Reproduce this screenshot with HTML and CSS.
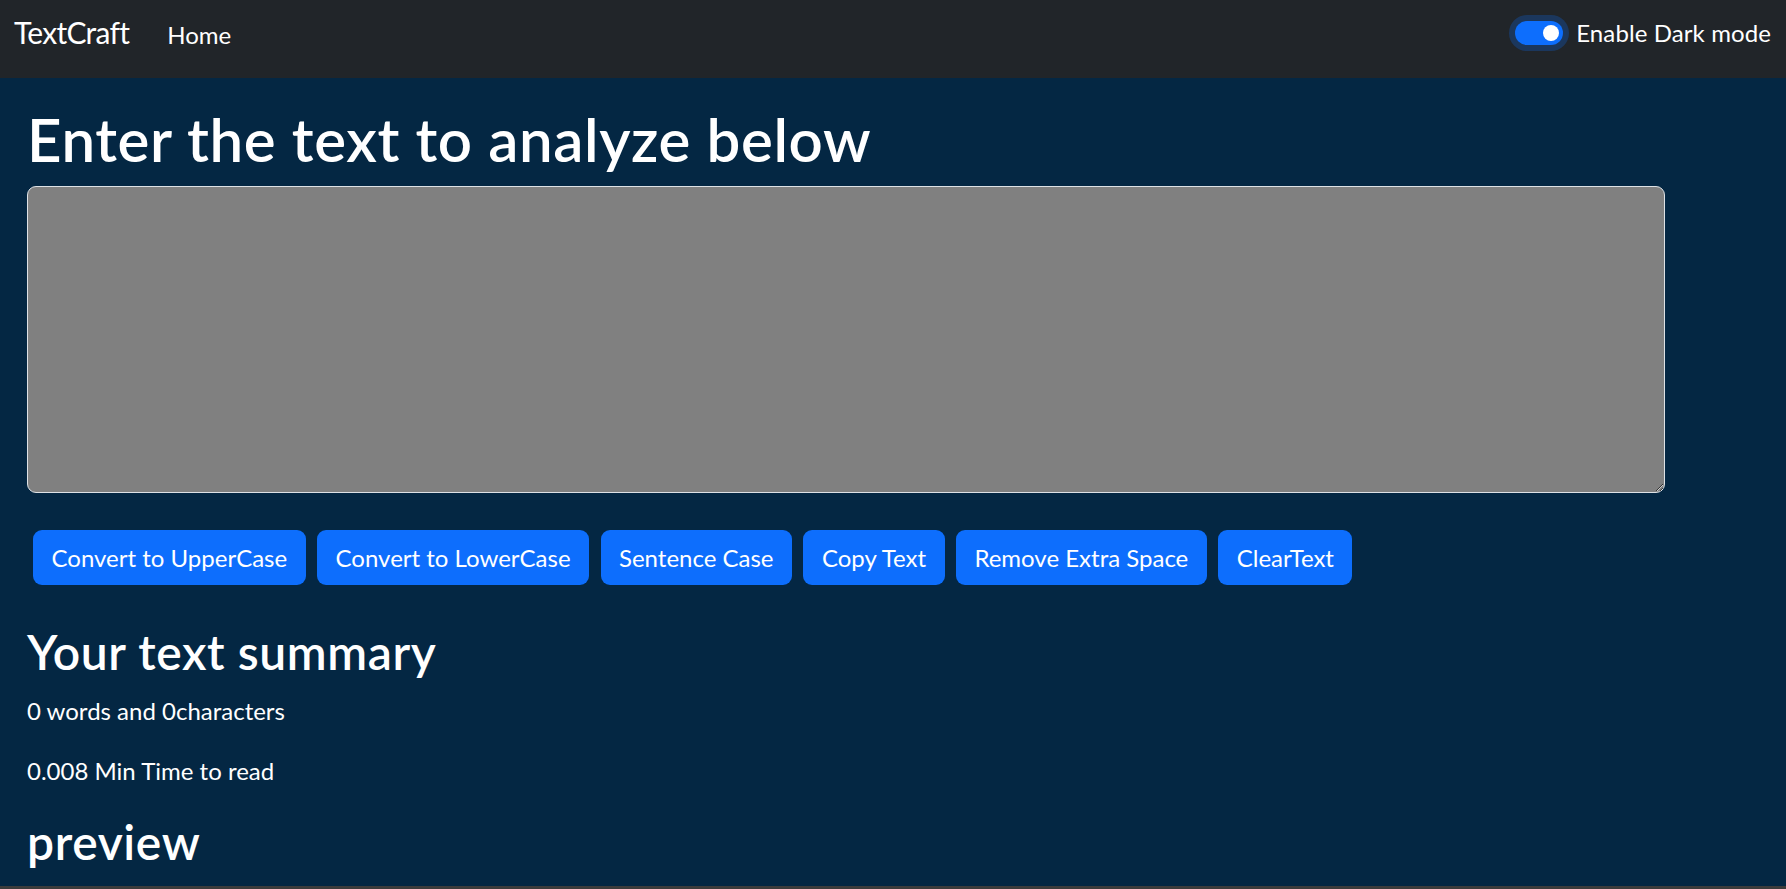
FILE: index.html
```html
<!DOCTYPE html>
<html lang="en">
<head>
<meta charset="utf-8">
<title>TextCraft</title>
<link rel="stylesheet" href="styles.css">
</head>
<body>
<div class="page">
  <nav class="navbar">
    <div class="nav-left">
      <a class="brand" href="#">TextCraft</a>
      <a class="nav-link" href="#">Home</a>
    </div>
    <div class="nav-right">
      <span class="switch"></span>
      <label class="switch-label">Enable Dark mode</label>
    </div>
  </nav>
  <main class="main">
    <section class="editor">
      <h1 class="title">Enter the text to analyze below</h1>
      <textarea class="textbox"></textarea>
      <div class="actions">
        <button class="btn">Convert to UpperCase</button>
        <button class="btn">Convert to LowerCase</button>
        <button class="btn">Sentence Case</button>
        <button class="btn">Copy Text</button>
        <button class="btn">Remove Extra Space</button>
        <button class="btn">ClearText</button>
      </div>
    </section>
    <section class="summary">
      <h2 class="subtitle">Your text summary</h2>
      <p class="stat">0 words and 0characters</p>
      <p class="stat">0.008 Min Time to read</p>
      <h2 class="subtitle">preview</h2>
    </section>
  </main>
  <div class="bottom-bar"></div>
</div>
</body>
</html>
```
FILE: styles.css
```css
* { box-sizing: border-box; }
html, body { margin: 0; padding: 0; }
body {
  font-family: Lato, "Noto Sans", sans-serif;
  color: #fff;
  background: #042743;
}
.page {
  height: 100vh;
  display: flex;
  flex-direction: column;
  overflow: hidden;
}
.navbar {
  flex: 0 0 78px;
  height: 78px;
  background: #212529;
  display: flex;
  justify-content: space-between;
  align-items: flex-start;
  padding: 0 15px 0 14px;
}
.nav-left {
  display: flex;
  align-items: baseline;
  padding-top: 14px;
}
.brand {
  color: #fff;
  text-decoration: none;
  font-size: 30px;
  line-height: 36px;
  letter-spacing: -0.75px;
  margin-right: 38px;
}
.nav-link {
  color: #fff;
  text-decoration: none;
  font-size: 24px;
  line-height: 28.8px;
}
.nav-right {
  display: flex;
  align-items: center;
  margin-top: 19px;
}
.switch {
  position: relative;
  width: 48px;
  height: 24px;
  border-radius: 12px;
  background: #0d6efd;
  box-shadow: 0 0 0 6px rgba(13, 110, 253, 0.25);
  margin-right: 13px;
}
.switch::after {
  content: "";
  position: absolute;
  right: 4px;
  top: 4px;
  width: 16px;
  height: 16px;
  border-radius: 50%;
  background: #fff;
}
.switch-label {
  font-size: 24px;
  line-height: 28.8px;
  letter-spacing: 0.1px;
}
.main {
  flex: 1;
  overflow: hidden;
  padding: 0 0 0 27px;
}
.editor {
  margin-top: 25px;
}
.title {
  margin: 0;
  font-size: 60px;
  line-height: 72px;
  font-weight: 600;
  letter-spacing: 0.6px;
}
.textbox {
  display: block;
  margin-top: 11px;
  width: 1638px;
  height: 307px;
  background: #808080;
  color: #fff;
  border: 1.5px solid #dee2e6;
  border-radius: 9px;
  font-family: inherit;
  font-size: 24px;
}
.actions {
  display: flex;
  gap: 11.4px;
  margin-top: 37px;
  padding-left: 6px;
}
.btn {
  height: 55px;
  padding: 0 18.5px;
  background: #0d6efd;
  color: #fff;
  border: none;
  border-radius: 9px;
  font-family: inherit;
  font-size: 24px;
}
.summary {
  margin-top: 38px;
}
.subtitle {
  margin: 0 0 12px;
  font-size: 48px;
  line-height: 57.6px;
  font-weight: 600;
  letter-spacing: 0.6px;
}
.stat {
  margin: 0 0 24px;
  font-size: 24px;
  line-height: 36px;
}
.bottom-bar {
  flex: 0 0 3px;
  background: #3c3c3c;
}
```
